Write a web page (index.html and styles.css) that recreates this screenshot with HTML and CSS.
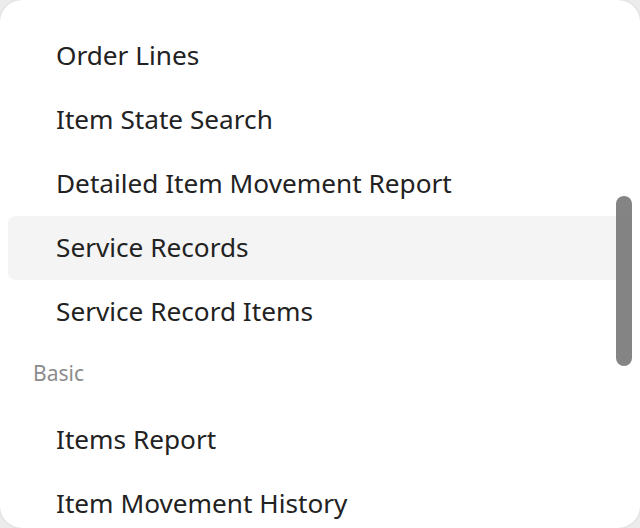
FILE: index.html
```html
<!DOCTYPE html>
<html lang="en">

<head>
    <meta charset="UTF-8">
    <meta name="viewport" content="width=device-width, initial-scale=1.0">
    <title>Reports</title>

    <link rel="stylesheet" href="styles.css">
</head>

<body>
    <div class="menu">
        <ul class="menu-list">
            <li class="menu-item">Order Lines</li>
            <li class="menu-item">Item State Search</li>
            <li class="menu-item">Detailed Item Movement Report</li>
            <li class="menu-item selected">Service Records</li>
            <li class="menu-item">Service Record Items</li>

            <li class="menu-header">Basic</li>
            <li class="menu-item">Items Report</li>
            <li class="menu-item">Item Movement History</li>
        </ul>

        <div class="scroll-thumb"></div>
    </div>
</body>

</html>
```

FILE: styles.css
```css
*,
*::before,
*::after {
    margin: 0;
    padding: 0;
    box-sizing: border-box;
}

body {
    width: 640px;
    height: 528px;
    overflow: hidden;
    background-color: #ececec;
    font-family: "Noto Sans", "Open Sans", sans-serif;
}

.menu {
    position: relative;
    height: 528px;
    background-color: #fff;
    border-radius: 22px;
    box-shadow: 0 0 3px rgba(0, 0, 0, .12);
    overflow: hidden;
}

.menu-list {
    list-style: none;
    padding: 24px 8px 0 8px;
}

.menu-item {
    height: 64px;
    display: flex;
    align-items: center;
    padding-left: 48px;
    padding-bottom: 2px;
    border-radius: 7px;
    font-size: 26.2px;
    color: #222;
}

.menu-item.selected {
    background-color: #f4f4f4;
}

.menu-header {
    height: 64px;
    display: flex;
    align-items: center;
    padding-left: 25px;
    padding-bottom: 6px;
    font-size: 21px;
    color: #8c8c8c;
}

/* overlay scrollbar */
.scroll-thumb {
    position: absolute;
    top: 196px;
    right: 8px;
    width: 16px;
    height: 170px;
    border-radius: 8px;
    background-color: rgba(110, 110, 110, .85);
}
```
